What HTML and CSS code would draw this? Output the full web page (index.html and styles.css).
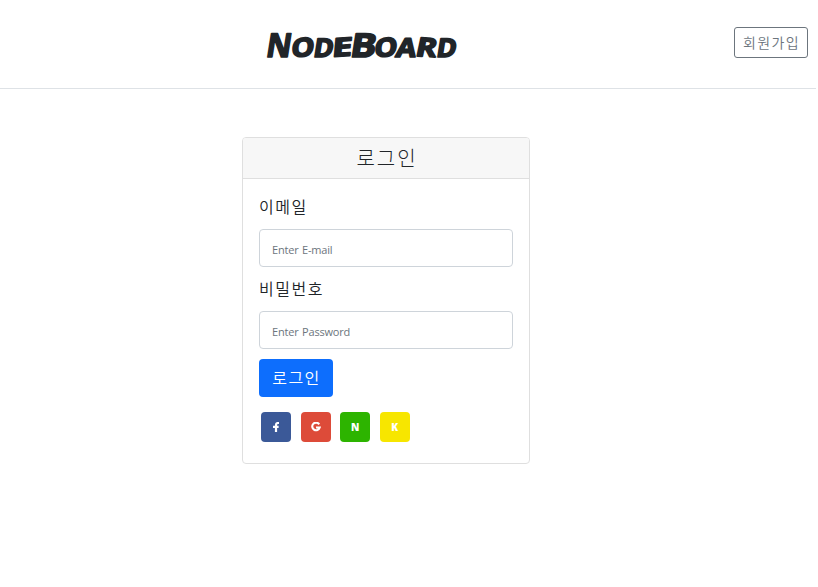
FILE: index.html
```html
<!DOCTYPE html>
<html lang="ko">
<head>
<meta charset="utf-8">
<title>NodeBoard</title>
<link rel="stylesheet" href="styles.css">
</head>
<body>
<header class="header">
  <svg class="logo" width="200" height="50" viewBox="0 0 200 50" role="heading" aria-level="1">
    <g class="logo-text" transform="translate(0 36.500) skewX(-9)">
      <text class="cap" x="3" y="0" textLength="25" lengthAdjust="spacingAndGlyphs">N</text>
      <text x="28" y="0" textLength="23" lengthAdjust="spacingAndGlyphs" transform="rotate(-5 39 -9)">O</text>
      <text x="50.500" y="0" textLength="20" lengthAdjust="spacingAndGlyphs">D</text>
      <text x="69" y="0" textLength="20" lengthAdjust="spacingAndGlyphs" transform="rotate(-4 78 -9)">E</text>
      <text class="cap" x="87" y="0" textLength="26" lengthAdjust="spacingAndGlyphs">B</text>
      <text x="111" y="0" textLength="23" lengthAdjust="spacingAndGlyphs" transform="rotate(-5 122 -9)">O</text>
      <text x="133" y="0" textLength="20" lengthAdjust="spacingAndGlyphs">A</text>
      <text x="153" y="0" textLength="21" lengthAdjust="spacingAndGlyphs" transform="rotate(3 163 -9)">R</text>
      <text x="173.500" y="0" textLength="20" lengthAdjust="spacingAndGlyphs">D</text>
    </g>
  </svg>
  <a class="signup">회원가입</a>
</header>
<main class="card">
  <h2 class="card-title">로그인</h2>
  <form class="form">
    <label class="label" for="email">이메일</label>
    <input class="input" id="email" type="email" placeholder="Enter E-mail">
    <label class="label" for="password">비밀번호</label>
    <input class="input" id="password" type="password" placeholder="Enter Password">
    <button class="submit" type="button">로그인</button>
    <div class="socials">
      <a class="social facebook"><svg width="8" height="10" viewBox="0 0 8 10"><path d="M7 1H6C4.500 1 4 1.700 4 3V10M1 4.800H6.600" fill="none" stroke="#fff" stroke-width="2.200"/></svg></a>
      <a class="social google"><svg width="10" height="10" viewBox="0 0 10 10"><path d="M8.200 2.300A3.800 3.800 0 1 0 8.700 5.500H5" fill="none" stroke="#fff" stroke-width="2.100"/></svg></a>
      <a class="social naver">N</a>
      <a class="social kakao">K</a>
    </div>
  </form>
</main>
</body>
</html>
```
FILE: styles.css
```css
* { box-sizing: border-box; }
body {
  margin: 0;
  width: 816px;
  background: #fff;
  color: #212529;
  font-family: "Noto Sans", "Noto Sans CJK KR", sans-serif;
  font-weight: 300;
}
.header {
  height: 89px;
  border-bottom: 1px solid #dee2e6;
  display: flex;
  align-items: flex-start;
  justify-content: space-between;
  padding: 20px 8px 0 262px;
}
.logo { overflow: visible; }
.logo-text {
  font-family: "Open Sans", sans-serif;
  font-weight: 700;
  font-size: 26px;
  fill: #212529;
  stroke: #212529;
  stroke-width: 1.6px;
  stroke-linejoin: round;
}
.cap { font-size: 33px; }
.signup {
  margin-top: 7px;
  width: 74px;
  height: 31px;
  border: 1px solid #6c757d;
  border-radius: 3px;
  color: #6c757d;
  font: 350 14px/28px "Noto Sans CJK KR", sans-serif;
  letter-spacing: 1.4px;
  padding-left: 8px;
  white-space: nowrap;
}
.card {
  margin: 48px 0 0 242px;
  width: 288px;
  height: 327px;
  border: 1px solid #dfdfdf;
  border-radius: 4px;
  overflow: hidden;
}
.card-title {
  margin: 0;
  height: 41px;
  background: #f7f7f7;
  border-bottom: 1px solid #dfdfdf;
  text-align: center;
  font: 300 20px/39px "Noto Sans CJK KR", sans-serif;
  letter-spacing: 1.9px;
  padding-left: 2px;
}
.form {
  display: flex;
  flex-direction: column;
  align-items: flex-start;
  padding: 16px;
}
.label {
  height: 24px;
  margin-bottom: 10px;
  font: 350 16px/22px "Noto Sans CJK KR", sans-serif;
  letter-spacing: 1.5px;
}
.input {
  width: 254px;
  height: 38px;
  margin: 0 0 10px;
  border: 1px solid #ced4da;
  border-radius: 4px;
  background: #fff;
  padding: 3px 12px 0;
  font: 400 11px "Open Sans", sans-serif;
  letter-spacing: -.2px;
  word-spacing: 1px;
}
.input::placeholder { color: #6c757d; opacity: 1; }
.submit {
  width: 74px;
  height: 38px;
  border: 0;
  border-radius: 4px;
  background: #0d6efd;
  color: #fff;
  padding: 0 0 2px 1px;
  font: 350 16px/36px "Noto Sans CJK KR", sans-serif;
  letter-spacing: 1.4px;
}
.socials {
  display: flex;
  gap: 9.6px;
  margin: 15px 0 0 2px;
}
.social {
  width: 30px;
  height: 30px;
  border-radius: 4px;
  display: flex;
  align-items: center;
  justify-content: center;
  color: #fff;
  font: 800 10px/30px "Open Sans", sans-serif;
}
.facebook { background: #3b5998; }
.google { background: #dd4b39; }
.naver { background: #2db400; }
.kakao { background: #f7e600; }
```
